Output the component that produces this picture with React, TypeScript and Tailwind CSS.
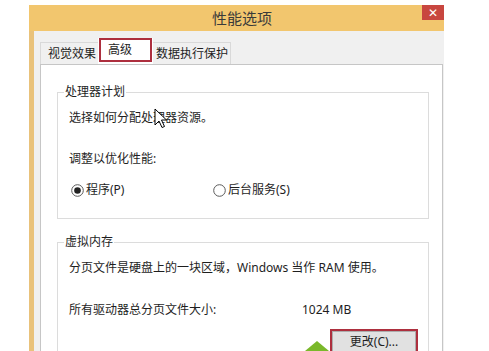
import React from "react";

const font = { fontFamily: '"Noto Sans", "Noto Sans CJK SC", sans-serif' };

function Radio({ checked }: { checked?: boolean }) {
  return (
    <svg width="13" height="13" viewBox="0 0 13 13" className="shrink-0">
      <circle cx="6.5" cy="6.5" r="5.8" fill="#fff" stroke="#5a5a5a" strokeWidth="1" />
      {checked && <circle cx="6.5" cy="6.5" r="3.3" fill="#222" />}
    </svg>
  );
}

function Group({ label, children, className = "" }: { label: string; children: React.ReactNode; className?: string }) {
  return (
    <div className={"relative border border-[#dcdcdc] ml-[16px] w-[372px] pl-[11px] pt-[17px] " + className}>
      <div className="absolute -top-[9px] left-[6px] bg-white px-[1px] leading-[16px] text-[12px] text-[#1e1e1e]">{label}</div>
      {children}
    </div>
  );
}

export default function App() {
  return (
    <div className="relative w-[489px] h-[351px] overflow-hidden bg-white text-[12px] text-[#1e1e1e]" style={font}>
      <div className="ml-[29px] mt-[5px] w-[415px]">
        {/* Title bar */}
        <div className="flex h-[26px] bg-[#f2c66e]">
          <div className="flex-1 pl-[183px] pt-[3px] text-[15px] leading-[20px] text-[#3a3a3a]">性能选项</div>
          <div className="flex h-[15px] w-[22px] items-center justify-center bg-[#c8463f] text-[12px] leading-none text-white">✕</div>
        </div>
        {/* Body */}
        <div className="h-[330px] border-l-[5px] border-[#e9c27b] bg-[#f0f0f0] pl-[6px] pt-[7px]">
          {/* Tabs */}
          <div className="flex h-[26px] items-end">
            <div className="flex h-[22px] w-[58px] items-center border-l border-t border-[#d9d9d9] bg-[#f0f0f0] pl-[7px] leading-[16px]">视觉效果</div>
            <div className="h-[26px] w-[55px] bg-white pl-[1px]">
              <div className="flex h-[24px] w-[53px] items-center border-2 border-[#ad2f3e] pl-[7px] leading-[16px]">高级</div>
            </div>
            <div className="flex h-[22px] w-[78px] items-center border-r border-t border-[#d9d9d9] bg-[#f0f0f0] pl-[3px] leading-[16px]">数据执行保护</div>
          </div>
          {/* Panel */}
          <div className="h-[300px] w-[403px] border border-[#c6c6c6] bg-white pt-[27px]">
            <Group label="处理器计划" className="pb-[20px]">
              <div className="leading-[16px]">选择如何分配处理器资源。</div>
              <div className="mt-[25px] leading-[16px]">调整以优化性能:</div>
              <div className="mt-[15px] flex h-[16px] items-center leading-[16px]">
                <div className="flex w-[144px] items-center pl-[2px]">
                  <Radio checked />
                  <span className="ml-[2px]">程序(P)</span>
                </div>
                <div className="flex items-center">
                  <Radio />
                  <span className="ml-[2px]">后台服务(S)</span>
                </div>
              </div>
            </Group>
            <Group label="虚拟内存" className="mt-[23px] pb-[10px]">
              <div className="leading-[16px]">分页文件是硬盘上的一块区域，Windows 当作 RAM 使用。</div>
              <div className="mt-[26px] flex leading-[16px]">
                <div className="w-[233px]">所有驱动器总分页文件大小:</div>
                <div>1024 MB</div>
              </div>
              <div className="mt-[11px] flex justify-end pr-[10px]">
                <div className="w-[88px] border-2 border-[#ad2f3e]">
                  <div className="flex h-[22px] items-center justify-center border border-[#adadad] bg-[#e1e1e1] leading-[16px]">更改(C)...</div>
                </div>
              </div>
            </Group>
          </div>
        </div>
      </div>

      {/* Mouse cursor */}
      <svg className="absolute left-[154px] top-[108px]" width="14" height="21" viewBox="0 0 14 21">
        <path d="M1 1 L1 17 L5 13 L8 19.5 L10.5 18.5 L7.5 12 L12.5 12 Z" fill="#fff" stroke="#000" strokeWidth="1" strokeLinejoin="round" />
      </svg>

      {/* Green annotation arrow */}
      <svg className="absolute left-[305px] top-[341px]" width="24" height="10" viewBox="0 0 24 10">
        <polygon points="12,0 24,10 0,10" fill="#7ab82a" />
      </svg>
    </div>
  );
}
